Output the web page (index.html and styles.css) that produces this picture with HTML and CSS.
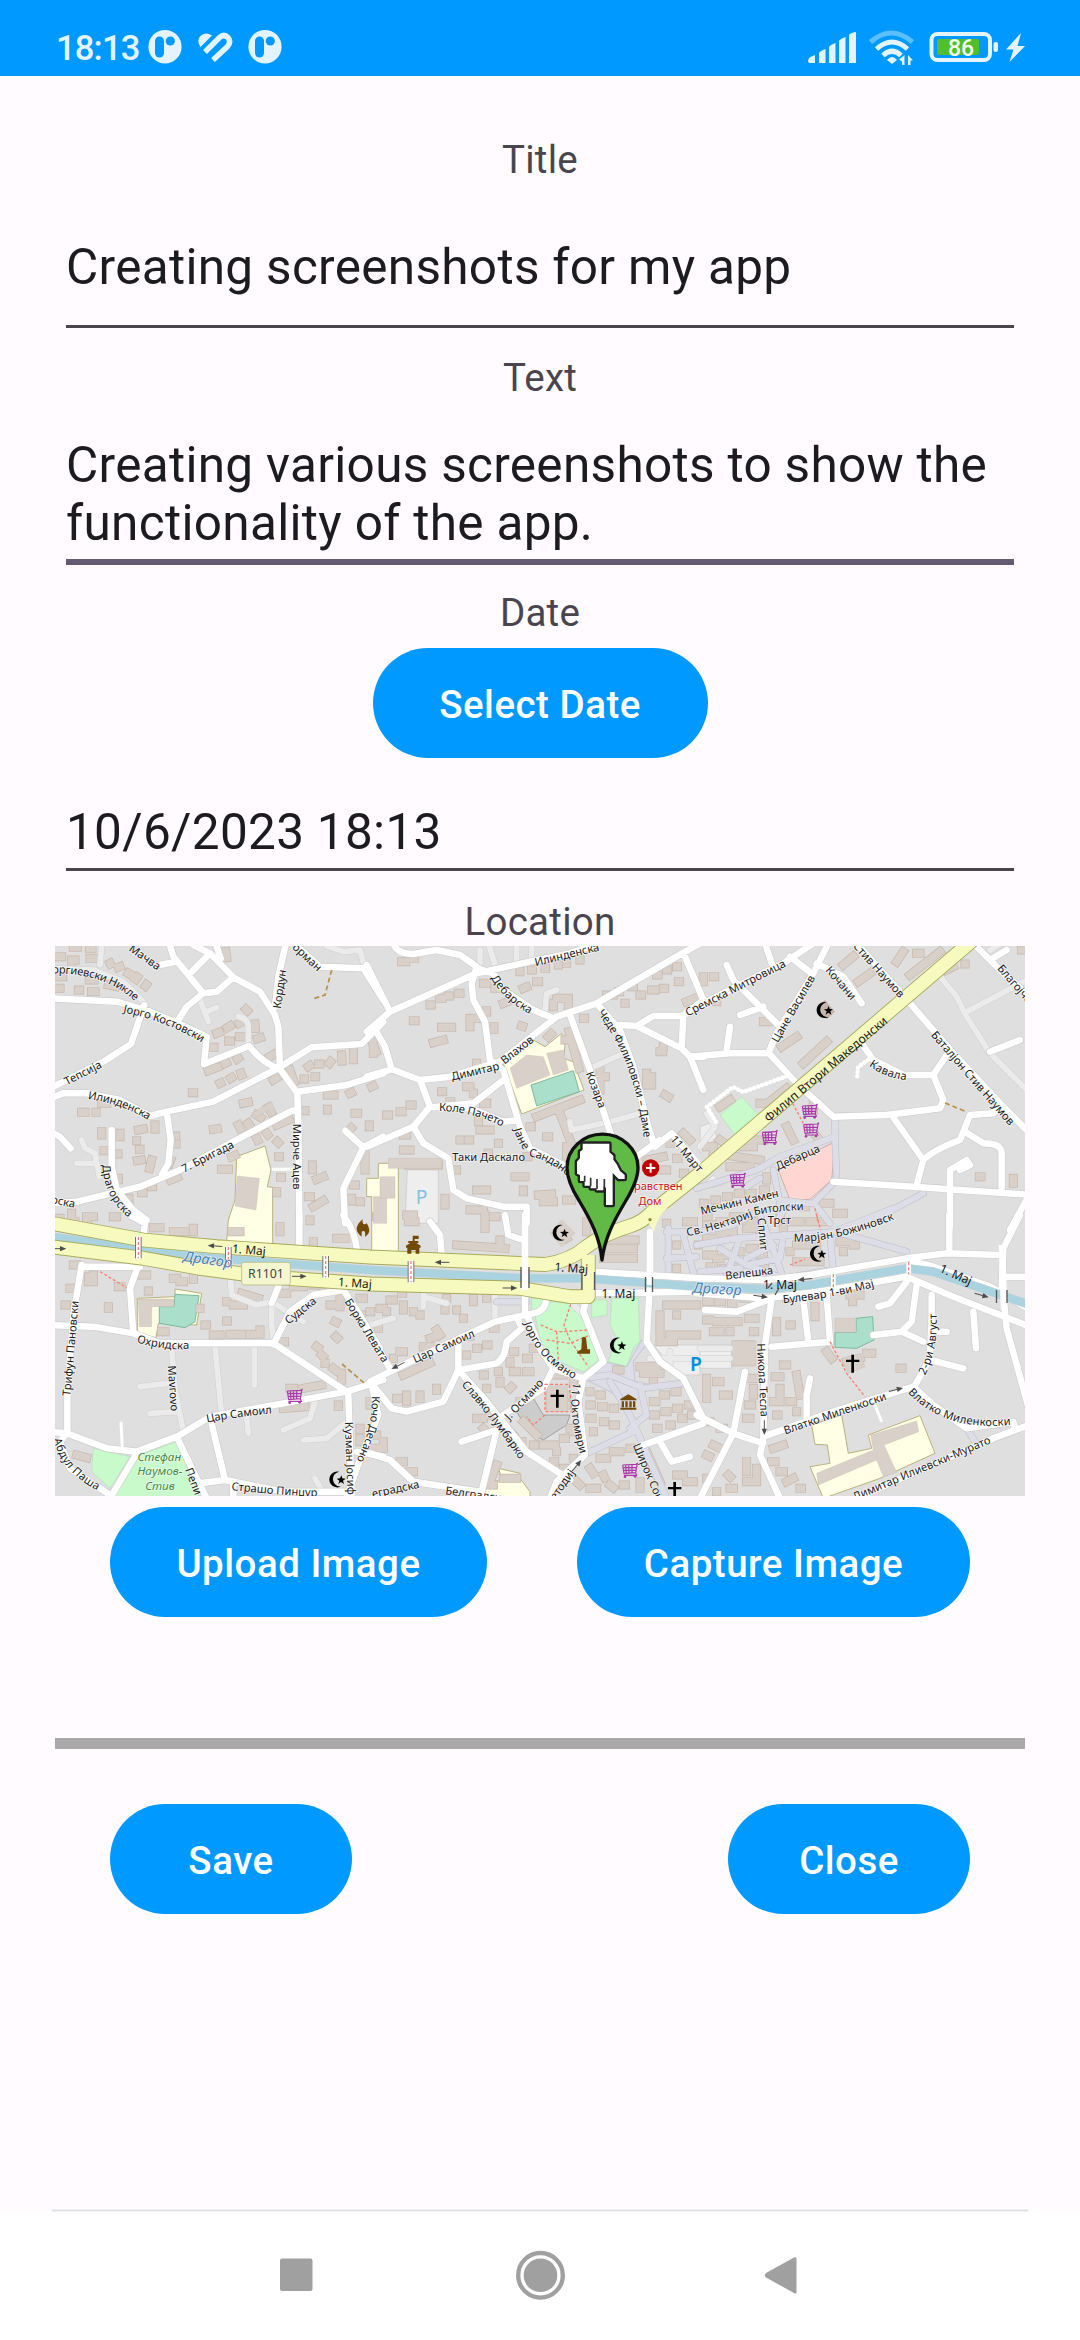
FILE: index.html
```html
<!DOCTYPE html>
<html lang="en">
<head>
<meta charset="utf-8">
<title>New note</title>
<link rel="stylesheet" href="styles.css">
</head>
<body>
<div class="screen">
<header class="status">
  <span class="clock">18:13</span>
  <svg class="notices" width="136" height="36" viewBox="147 29 136 36">
    <g id="badge"><ellipse cx="165" cy="46.7" rx="16.6" ry="16.8" fill="#e3f4ff"/><rect x="155" y="36.500" width="9" height="21" rx="4.500" fill="#0099ff"/><circle cx="170.300" cy="41" r="4.600" fill="#0099ff"/></g>
    <use href="#badge" x="100"/>
    <path d="M200.500 47Q196 40 201 35.500Q206 31.500 212 35.500Z" fill="#e3f4ff"/>
    <path d="M205 52L219.500 37.500Q224 33.500 228 37.500Q231.500 42 227.500 46.500L213 60" fill="none" stroke="#e3f4ff" stroke-width="5.500"/>
    <path d="M208 56.500L222 42.500" stroke="#e3f4ff" stroke-width="0"/>
  </svg>
  <svg class="signals" width="220" height="40" viewBox="806 27 220 40">
    <g fill="#e3f4ff"><path d="M808 61q0-4 7-6v8h-5q-2 0-2-2zM819 53q1-2 6.500-4v14h-6.500zM829 47q1-2 6.500-4v20h-6.500zM839 41q1-2 6.500-4v26h-6.500zM849 35q1-2 7-3v31h-7z"/></g>
    <g fill="none" stroke="#e3f4ff" stroke-width="5"><path d="M870.500 42Q891 24 912.500 42" opacity=".4"/><path d="M876.500 49Q892 35 907.500 49M883 55.500Q892 47 901 55.500"/></g>
    <path d="M887 60q5-6 10 0l-5 4z" fill="#e3f4ff"/>
    <path d="M904.500 55v10h-2.500v-3.500l-3-2zM908 65v-10l5 5.500h-2.500v4.500z" fill="#e3f4ff"/>
    <rect x="931.500" y="34" width="58.500" height="26" rx="6" fill="none" stroke="#e3f4ff" stroke-width="4"/>
    <rect x="937" y="39" width="42" height="16" rx="2" fill="#50be2d"/>
    <text x="961" y="56" class="charge">86</text>
    <rect x="993.500" y="42" width="4.500" height="10" rx="2" fill="#e3f4ff"/>
    <path d="M1021 33L1006 49.500H1013.500L1009.500 62L1025 46H1017.500Z" fill="#e3f4ff"/>
  </svg>
</header>
<main class="form">
  <div class="label title-label">Title</div>
  <div class="field title-field">Creating screenshots for my app</div>
  <div class="label text-label">Text</div>
  <div class="field text-field">Creating various screenshots to show the functionality of the app.</div>
  <div class="label date-label">Date</div>
  <button class="btn date-btn">Select Date</button>
  <div class="field date-field">10/6/2023 18:13</div>
  <div class="label place-label">Location</div>
  <svg class="map" width="970" height="550" viewBox="55 946 970 550">
  <defs>
    <g id="cart"><path d="M-22-16L18-18L24-22M-22-16L-18 10L17 7L22-22M17 7L20 15H-18M-20-8H18M-19 0H17M-13-16L-11 9M-4-16L-3 9M6-16L6 8" fill="none" stroke="#ac39ac" stroke-width="3.500"/><circle cx="-15" cy="19" r="4" fill="#ac39ac"/><circle cx="15" cy="18" r="4" fill="#ac39ac"/></g>
    <g id="crescent"><path d="M8-23A24 24 0 1 0 14 21A20 20 0 1 1 8-23Z"/><path d="M14-12L17-3L27-2L19 4L22 14L13 8L5 14L8 4L0-2L10-3Z"/></g>
    <path id="cross" d="M-4-26H4V-11H20V-4H4V28H-4V-4H-20V-11H-4Z"/>
    <g id="hall" fill="#734a08"><path d="M-24-10L0-24L24-10V-6H-24ZM-20-3h7v18h-7zM-9-3h7v18h-7zM3-3h7v18h-7zM14-3h7v18h-7zM-24 16h48v6h-48z"/></g>
    <g id="arrow"><path d="M-22 0H8" stroke="#4d4d4d" stroke-width="3"/><path d="M22 0L3-8V8Z" fill="#4d4d4d"/></g>
    <g id="bridge"><path d="M0-32V32" stroke="#777" stroke-width="20"/><path d="M0-34V34" stroke="#fff" stroke-width="14"/><path d="M0-32V32" stroke="#fa8072" stroke-width="4" stroke-dasharray="9 6"/></g>

    <g id="streets">
      <path transform="translate(50 940) scale(.33333)" d="M0 175L200 185L300 215L385 250L470 290L462 372L597 318Q640 372 690 387M0 445L160 365L243 312L283 195M0 475L40 460H110L210 480L300 528L350 515L490 485L680 387L785 322L935 312L1000 245M350 515L362 600L355 670L335 705M0 790L80 785L270 740L390 690L550 605L720 515L742 508M355 0L370 50L460 160L500 155L550 112L480 40L420 100M430 15L480 40M500 20L512 55M550 112L630 155L675 225L685 260L690 387L742 460L745 550L748 850M742 455L890 435L1000 400M460 160L410 200L385 240M710 0L685 110L675 200M330 75L380 65M185 570V680L200 750L250 810L290 840M0 575L30 590L62 625M740 18L810 80L940 85L1000 180M885 572L940 622L1000 590M940 622L880 745L885 850"/>
      <path transform="translate(370 940) scale(.33333)" d="M-10 275L60 215L320 100L480 65L600 40L720 0M-10 75L60 215M10 260L45 320L65 388L150 420L240 410L390 365L560 230L680 190L940 38L1000 5M-10 410L65 388M70 10Q80 42 130 42L200 30L270 45L320 80L305 130L310 180L345 245L360 360L400 390L450 560L480 625L590 680M320 85L370 100L400 150L490 210L550 235M600 225L660 390L725 590M680 190L750 270L790 380L835 560L855 620L905 580M750 255L800 258L850 228H940L1000 180M800 258L935 325L960 350H1000M940 225L935 325M960 350L1000 450M940 38L1000 180M400 420L310 490L200 500M150 420L180 500L130 560L-10 620M130 560L160 610L235 655L250 750L290 775L400 800H470V850M180 500L300 505L400 545L445 540M905 580L940 620L1000 690M870 600L800 650"/>
      <path transform="translate(700 940) scale(.33333)" d="M-40 215L120 135L250 70L340 10M80 75L100 120L240 260M120 225L190 200M90 260L80 330M-30 350L90 340H205L230 280L340 100L385 10M270 50L335 100M195 10L215 70M350 70L430 110L485 190M460 0L600 155L760 340L900 490L1000 590M205 338L290 430L400 530L560 525L720 505L730 480L700 405L740 345M700 405H610L520 360L485 310M575 525L670 660L650 735M670 660Q700 630 780 600L810 525L880 520L900 495M795 575L850 610Q905 610 905 640V745M400 725L640 740L1000 765M750 860V690L800 660L810 675L780 690M820 10L900 90L1000 180M870 335L960 300M990 760L930 870M870 60L920 30"/>
      <path transform="translate(50 1215) scale(.33333)" d="M0 330L130 335L250 355L330 385H670L890 530L1000 495M95 150L70 300L52 540V650M95 155H270M265 150L240 220L250 355M280 60L285 25L240 0M670 388L720 290L790 240L880 225L910 270L990 400M0 650L50 655L170 700L260 710L380 665L480 605L700 565L890 530M380 665L440 790L470 850M480 605L525 795L450 805M525 795L700 830H900M895 540L905 850M550 800V850M260 715L180 850M50 655L30 680L60 760L180 840M965 510L985 600L920 760L890 850M920 710L1000 725M748 0V90M880 0Q915 50 920 100M685 215L665 265"/>
      <path transform="translate(370 1215) scale(.33333)" d="M0 500L130 435L375 320L490 295Q525 290 530 250M440 305L455 340L410 380Q405 430 380 445L265 465L220 560L110 590L65 580L0 500M265 380V465L350 560L470 710L600 795M275 680L380 645L330 850M-10 340L60 460M475 310L510 400L550 460L640 490L700 440L640 290L650 240M550 460L520 520L400 600M640 490L625 560L645 720L560 800L540 850M0 715L60 735L130 800L330 830M180 20L210 60L215 120M465 0V300M405 0L415 60L460 75M840 50V200L830 380L870 440L940 490L1000 610M820 690L1000 625M870 680L905 740L960 725M670 170L990 190M670 235L990 230"/>
      <path transform="translate(700 1215) scale(.33333)" d="M0 190L200 195L330 180L620 130L740 115L900 120M-10 235L200 250L390 225L620 185L760 245L990 335M640 140L700 155L870 215L1000 290M15 285L110 290L215 250L195 390L190 670M215 395L390 380L380 240M310 255L325 380M620 200L570 265L535 275M650 210L635 320L605 350L670 380M520 360L605 350M695 240V350H740M695 300L690 430L640 520M690 435L790 460M820 290L828 400M910 240L920 340L1000 630M905 230L910 100L960 0M748 0V110M920 185H1000M190 665L400 590L640 515L700 570L800 640L940 620L945 640M-10 600L100 655L190 685M135 470L100 655L0 850M190 670L180 720L240 850M330 490L320 540V620M420 870L880 670L1000 625"/>
    </g>
    <g id="lanes">
      <path transform="translate(50 940) scale(.33333)" d="M0 85L130 90L220 125L285 190M155 18L150 75M95 600L105 625L135 640L148 710M80 670H140M450 180L475 245M470 215L500 203M565 230Q595 235 595 260V310M830 18L880 35L930 30L945 85"/>
      <path transform="translate(370 940) scale(.33333)" d="M355 10L380 90M440 10V60M485 10V60M525 210L530 160L560 150M660 385L750 345M600 545L605 570L720 545L830 515M330 30V70"/>
      <path transform="translate(700 940) scale(.33333)" d="M720 110L770 170L800 230L870 340L1000 470M800 215L1000 110M20 520L45 560L0 620M870 30L920 0"/>
      <path transform="translate(50 1215) scale(.33333)" d="M365 400L375 520L400 650M270 515L355 505M300 595L380 590M495 395L515 600M613 395V510M590 605L595 655M700 645L780 610L795 560M760 675L830 670L890 620M540 170L545 240L620 270L665 260V330L672 385M665 260L760 320M795 790L815 825"/>
      <path transform="translate(370 1215) scale(.33333)" d="M160 230V275M160 245L230 265M0 330L70 310M375 235V320M610 270Q660 310 680 380M840 430H990M900 410V460"/>
      <path transform="translate(700 1215) scale(.33333)" d="M0 400H90M0 430H90"/>
    </g>
    <g id="walks">
      <path transform="translate(700 940) scale(.33333)" d="M405 540V590L240 650L170 690L-10 745M405 590L410 720L340 790H240L220 690M140 740L180 715M240 780L320 790M500 850L670 760M260 790L230 850M350 800L390 850"/>
      <path transform="translate(370 1215) scale(.33333)" d="M463 220V300M380 260H470M640 490L720 480L820 520L940 505M720 500L780 600L890 850M780 640L830 600L810 510M640 720L790 650M890 50H1000M895 40V190M890 130L980 125M940 60L975 190"/>
      <path transform="translate(700 1215) scale(.33333)" d="M-10 90L110 70L270 60L400 50L480 70L620 110M60 100L140 150L250 190L395 165M120 70L80 180M180 0L215 90L250 190M390 50L400 180M0 50L100 30L170-10M250 60L240 130L140 150M140 130L220 90M400 50L480 20L580-20M800 640L825 680M0 170L120 160"/>
    </g>
    <g id="houses">
      <path transform="translate(50 940) scale(.33333)" d="M25 50h10M70 22h12M118 25h8M65 60h10M120 55h14M22 110h16M65 80h0M118 120h14M22 145h8M85 150h4M125 155h10M180 70l1 2M205 82l5-2M235 100l10 6M258 118l4-6M286 138l3-4M175 135l20 4M528 35l2 18M588 208l4 4M500 280l8-3M532 263l8-5M568 250l6-3M536 303h5M568 290h8M615 252l1 13M622 296l9-3M490 322h2M475 392l28-10M525 370l4-2M562 357l3-2M510 430l2-1M542 415l3-2M573 400l2 5M427 458h4M660 350l14-8M670 420l10-6M720 390l12 35M762 417h2M795 410h2M775 380l4-3M806 372h4M838 370l4-5M875 345l1 18M910 335v24M970 315l8 20M95 517h10M138 517h0M155 490h15M155 575v10M210 580v10M265 570l15-3M315 555v12M260 602h0M268 628h2M262 662l12-2M305 660l-6 25M375 588h2M378 612h0M204 642h0M205 715v4M162 632h0M490 568l12-2M580 490l15-3M565 555l6 12M595 550l8 12M620 525l12 8M655 502l8 14M620 595l3 6M650 580l3 4M682 605l3 3M680 555l38-16M763 512h2M832 508v2M832 465h20M900 460l4-2M965 440l4-2M915 520h8M958 555v5M900 568l4-4M515 688h20M545 650l10-4M686 650h2M692 712h2M680 755v3M787 675v14M800 718l20-8M775 770h6M790 800l30-18M910 735h6M905 775v8M945 640v50M930 785h2M362 720l20-8M305 740h3M275 758h4M237 775v5M65 820v8M110 830h20M190 830h10M358 670l4-10"/>
      <path transform="translate(370 940) scale(.33333)" d="M95 65h12M130 55h4M130 242h5M215 262h30M300 235v25M315 235h20M350 212v4M372 260v8M190 308l30-8M180 195h4M208 175h8M235 168h4M265 160h5M340 130h10M375 145h3M400 190l10-4M460 145l10-4M500 125h6M450 95h0M485 90h2M525 85h2M565 75h0M590 70h0M630 60h0M560 175h35M595 180v20M550 190v10M455 258l3 1M535 290l8-8M640 235h4M597 275l30 110M585 300h4M710 165h20M745 155h4M785 140h5M765 190h0M810 165h5M845 150h10M880 145h4M925 125h4M860 105h4M890 90h3M920 80h2M950 185l25-10M870 335h8M690 390v40M700 410h6M830 400v35M845 410v25M885 465l10 6M690 450h0M10 300v40M100 585h10M100 630h20M50 525h6M90 515h6M120 495h6M215 455h3M240 485h2M290 440h10M310 460h0M340 490h10M325 540v5M330 570h30M270 600h0M295 600h4M385 610h0M355 640h0M320 370v5M260 690h0M320 750h30M225 775v20M300 810h40M370 830h8M435 710h30M460 750v5M505 765l40-3M520 785h30M590 780h15M530 590h6M480 560h4M500 530L630 480M570 520L600 600M590 620v40M940 580l20 20M900 600v10M920 655h4M940 700h4M830 660l50-10M840 690h50M115 675h90M470 650h4M610 620v30M880 320h0"/>
      <path transform="translate(700 940) scale(.33333)" d="M10 110v15M40 110h4M50 185h0M190 245h15M430 75l30-26M475 125l35-25M630 105l90-70M590 65l20-30M650 40h10M740 90l20-10M795 72h0M965 30h0M245 320L290 290M310 370L380 305M60 500l30-20M180 490h20M215 480L260 445M20 620h20M60 600L90 620M40 640L180 660M90 680h60M100 620h60M150 600h40M260 560l20 40M350 590l5 6M838 710h5M940 715v15M340 490v20M10 790h4M45 780h4M80 770h6M115 760h6M150 760h6M190 750h6M200 710v10M20 830h4M370 790h20M410 820h20M310 800h6"/>
      <path transform="translate(50 1215) scale(.33333)" d="M20 10h10M75 20h0M110 25h2M310 38h20M370 50h35M430 40v10M545 50h25M690 35v15M780 15v2M860 70h25M790 80v8M70 150h10M115 185v15M130 180v20M60 220h2M45 270h4M175 275v5M205 215h8M260 180h30M295 228h0M370 190h10M430 185v8M390 200h10M530 260h0M530 318h2M575 235l50 15M550 270h30M450 280h0M465 330h4M335 350h10M490 360h20M540 358h35M600 358h8M630 345v12M700 380h4M730 215h30M790 210h25M840 270h10M870 250v25M855 320l4 2M858 365l4 4M800 395l4 3M815 420l4 4M825 445h0M850 460l8 6M875 475v20M720 520h10M760 520L815 510M700 580L765 575M865 570v4M960 560v10M930 640v4M930 670v10M80 720l30 8M240 70h20M690 235h20M930 250h10M960 290h2M985 330v10M930 300h4M960 700h20"/>
      <path transform="translate(370 1215) scale(.33333)" d="M115 20h20M345 0v40M260 90L405 100M390 75v20M575 45l15 25M650 20v30M700 100h90M720 75h75M700 130h90M20 5v0M110 0h20M30 280h10M60 255h10M50 290h0M95 235h3M100 270v15M130 290h0M150 300h0M225 285h0M230 250h0M260 285h0M310 250v10M350 250h0M200 345l10 15M180 370l15-5M160 395h20M280 310v0M90 410h10M70 430h0M100 480l80-36M300 360v4M320 400h3M350 390h4M370 340h5M290 420h0M200 520v6M110 540v20M80 550h4M150 540v10M340 480h3M385 470h0M420 440v4M430 410h4M470 430h5M490 400h0M430 470h10M470 470h10M390 500v4M350 520h0M420 520l4-4M450 560h4M320 610h20M360 600h0M340 640l10 10M420 650l10 10M460 620l40 40M450 680h6M490 690h4M520 690h10M550 690h6M580 670h6M610 650h0M550 740h4M580 760h4M610 730h0M540 540H590M540 570H590M550 480h30M610 500h0M870 300v80M890 270h90M920 300v0M900 360h80M880 380h30M740 465h10M810 455h50M820 475h50M850 500h0M660 530h0M690 540h4M660 570h4M695 575h6M730 580h4M660 610h6M700 620h4M670 650h0M730 630h6M850 560h8M880 540h6M915 530h6M850 600h6M885 590h6M920 580h6M955 570h6M860 640h4M900 630h4M935 610h4M965 600h0M660 760l10 15M690 730h20M730 710h20M700 780l4 8M720 810l10 8M660 820h20M780 700h4M620 800l10 10M760 810h6M810 800v20M830 710l40 90M920 780h20M950 800h20M380 750l-20 50M400 790h40M90 740h10M120 770h10M40 680v20M20 660v0M350 810h20M890 25h0M920 90h0M950 20h20M920 160h0M985 90h0M600 640h0M560 710h0"/>
      <path transform="translate(700 1215) scale(.33333)" d="M20 30h20M60 20h10M100 5h20M20 70h20M60 55h10M90 50h10M140 40h20M150 20h10M20 120h20M50 130h10M80 120h0M30 155h10M70 160h4M110 110h10M150 100h14M110 140h0M180 60h0M180 120h10M190 160h4M270 20h30M330 20h20M370 20h4M290 90h60M270 110h0M290 140h70M350 90v50M330 70h0M420 80h30M430 110h0M460 90h6M250 40h0M240 10h0M20 260h10M55 260h10M95 265h4M130 250h10M20 315h10M50 320h10M80 320h10M110 320h4M145 310h20M160 350h4M40 350h20M90 350h0M345 275v30M450 240h30M458 260v0M230 320v30M270 330h4M260 250h0M110 390H150V440H110ZM120 410h20M380 410l15 20M440 440L480 430M500 415h15M600 460h6M20 490v60M50 500h10M70 540h15M150 490h30M160 520v20M145 570h10M225 485h15M250 450h10M240 520v40M220 560h20M290 480l10 60M270 560h8M230 600h4M290 590h0M30 620h0M60 640h10M140 610h10M40 690l20 10M20 720l8 4M85 780l6 6M140 740v30M170 760v20M140 800h30M90 820h10M50 830h0M220 700l30-10M215 740h10M240 770h10M260 800l20-10M300 820h4M20 790h0"/>
    </g>
    <path id="p1" d="M10 85Q170 85 262 170"/><path id="p2" d="M216 201Q360 230 468 298"/><path id="p3" d="M110 462Q220 475 306 530"/><path id="p4" d="M172 668Q175 770 250 824"/><path id="p5" d="M372 100Q410 170 492 212"/><path id="p6" d="M205 498Q310 498 405 548"/><path id="p7" d="M688 203Q810 350 837 600"/><path id="p8" d="M482 634Q560 650 625 720"/><path id="p9" d="M444 557Q455 600 478 628"/><path id="p10" d="M512 363Q560 400 624 406"/><path id="p11" d="M260 366Q330 390 422 388"/><path id="p12" d="M368 446L378 594"/><path id="p13" d="M466 608Q560 590 667 580"/><path id="p14" d="M24 664Q45 760 153 815"/><path id="p15" d="M474 314Q505 420 625 482"/><path id="p16" d="M626 500Q605 580 646 718"/><path id="p17" d="M628 516Q740 640 940 613"/><path id="p18" d="M280 495Q370 590 465 732"/><path id="p19" d="M980 535Q985 650 928 750"/><path id="p20" d="M658 480Q700 410 695 290"/><path id="p21" d="M295 65Q410 65 585-4"/><path id="p22" d="M240 251Q400 235 527 199"/><path id="p23" d="M240 647H472"/><path id="p24" d="M-65 54Q70 28 165-15Q230-29 335-31"/><path id="p25" d="M537 809Q670 825 811 830"/>
  </defs>

  <rect x="55" y="946" width="970" height="550" fill="#dfdfdf"/>
  <g class="grounds">
    <g transform="translate(50 940) scale(.33333)"><path class="school" d="M560 650L645 618L663 690L652 740L668 742V915L530 905L535 840L555 780ZM950 715H985V670H1045V945H965V770H950Z"/></g>
    <g transform="translate(370 940) scale(.33333)"><path class="school" d="M400 370L490 300L525 320L575 280L585 318L580 355L610 365L642 450L455 522Z"/><path class="pitch" d="M483 435L610 392L628 455L500 498Z"/><path class="lot" d="M112 690H205V850H105Z"/></g>
    <g transform="translate(700 940) scale(.33333)"><path class="plaza" d="M235 690L405 605L395 720L330 778L270 780Z"/><path class="park" d="M60 525L125 470L175 525L105 585Z"/><path class="lot" d="M0 560L40 545L50 590L0 640ZM0 740L40 705L70 735L0 750Z"/></g>
    <g transform="translate(50 1215) scale(.33333)"><path class="school" d="M262 250L375 245V222L455 235L440 330L325 325L318 368L262 355Z"/><path class="pitch" d="M375 238L447 242L435 320L405 338L328 325V275H372Z"/><path class="park" d="M255 725L380 680L450 850H190ZM130 700L240 725L180 820L125 770Z"/><path class="school" d="M810 200H825V230H810Z"/></g>
    <g transform="translate(370 1215) scale(.33333)"><path class="park" d="M495 300L540 260L610 265L660 350L695 430L640 470L520 420ZM725 250H805L810 380L790 400L770 455L715 440L740 370L720 330ZM485 250H530L505 290H485ZM665 255H712V300L665 308Z"/><path class="walkarea" d="M640 490L700 440L770 455L815 375L832 385L790 440L795 500L850 510L780 570L720 530Z"/><path class="lot" d="M850 390H990V480H930Z"/><path d="M440 590L490 550L520 600L600 600L590 630L520 675L480 655Z" fill="#ccc" stroke="#888" stroke-width="2"/><path class="school" d="M385 760L450 775V790L480 830V850H340L350 795L400 800Z"/></g>
    <g transform="translate(700 1215) scale(.33333)"><path class="lot" d="M0 390H95V460H0Z"/><path class="school" d="M335 630L425 600L445 715L515 700L505 660L660 602L705 715L540 790L370 850L330 755L390 745L382 690L345 688Z"/><path class="pitch" d="M405 352H468V310L518 305L522 375L470 400L405 397Z"/></g>
  </g>
  <use href="#houses" class="house-edge"/><use href="#houses" class="house"/>
  <g class="block">
    <path transform="translate(50 940) scale(.33333)" d="M562 708L628 715L618 810L555 798ZM970 770H1010V850H970ZM605 520L665 485L678 520L665 530L655 510L620 532Z"/>
    <path transform="translate(370 940) scale(.33333)" d="M420 385L470 345L520 350L540 405L440 445ZM530 340L580 330L595 390L550 405ZM30 710H75V775H30ZM55 655H215V685H55Z"/>
    <path transform="translate(50 1215) scale(.33333)" d="M265 252H372V275H305V335H268Z"/>
    <path transform="translate(370 1215) scale(.33333)" d="M530 512H592V590H530ZM540 55L575 15L615 55L575 95Z"/>
    <path transform="translate(700 1215) scale(.33333)" d="M350 775L520 705L512 660L650 618L656 650L552 690L590 772L550 785L530 735L355 810ZM405 310H468V352H405ZM95 378H168V452H95ZM425 430L480 415L495 455L445 475Z"/>
  </g>
  <use href="#lanes" class="lane-edge"/><use href="#lanes" class="lane"/>
  <use href="#walks" class="walk-edge"/><use href="#walks" class="walk"/>
  <use href="#streets" class="street-edge"/>
  <g class="thin"><path d="M271.700 1169.300H297M121 1421.700L122.300 1448M875 1405L881.700 1422"/></g>
  <use href="#streets" class="street"/>
  <path class="dotted" d="M707 1107L733 1087L743 1092L790 1075M707 1107L716 1122M868 1060L858 1067L857 1080"/>
  <path d="M50 1236.700L136.700 1248.300L216.700 1258.300L326.700 1266.700L370 1270L523.300 1278.300H583.300L700 1286.700L766.700 1289L810 1285L906.700 1268.300L933.300 1271.700L1030 1305" fill="none" stroke="#c9d6da" stroke-width="9"/>
  <path d="M50 1236.700L136.700 1248.300L216.700 1258.300L326.700 1266.700L370 1270L523.300 1278.300H583.300L700 1286.700L766.700 1289L810 1285L906.700 1268.300L933.300 1271.700L1030 1305" fill="none" stroke="#aad3df" stroke-width="8"/>
  <g class="major-edge"><path id="major" d="M980 934L700 1173.300L653 1211Q643 1222 630 1226Q603 1234 586 1247Q570 1261 545 1264.500L370 1257L216.700 1246.700L143.300 1240L50 1223M50 1246.700L143.300 1258.300L200 1268.300L263.300 1276.700L370 1284L520 1288.300L570 1296.700H588.300V1255"/></g>
  <use href="#major" class="major"/>
  <path d="M650 1225L643 1212L668 1208Q657 1216 654 1232Z" fill="#f7fabf"/>
  <path class="street" d="M525 1225V1290M650 1233V1285M1002 1245L1004 1310"/>
  <g stroke="#555" stroke-width="1.300"><path d="M521 1267V1288M529 1267V1288M582 1272V1290M594.500 1272V1290M645.500 1277V1292M652.500 1277V1292M996.500 1290V1303M1007 1290V1303M768 1288L772 1283M775 1295L779 1288"/></g>
  <g transform="translate(50 1215) scale(.33333)"><use href="#bridge" x="265" y="98"/><use href="#bridge" x="535" y="128"/><use href="#bridge" x="827" y="155"/><use href="#bridge" x="1083" y="170"/></g>
  <g transform="translate(700 1215) scale(.33333)"><path d="M400 178V225M626 142V178" stroke="#fff" stroke-width="14"/><path class="foot" d="M400 178V225M626 142V178"/></g>
  <g class="foot">
    <path transform="translate(50 1215) scale(.33333)" d="M150 170L230 218"/>
    <path transform="translate(370 1215) scale(.33333)" d="M602 268L582 330L600 375L655 455M512 330L560 350L580 350L655 345M530 375L600 385L660 360M560 350L565 440M525 508H598L605 590H525ZM525 600L490 630L470 605"/>
    <path transform="translate(700 1215) scale(.33333)" d="M390 380L440 475L495 545M350 0L362 45M270 150L315 132"/>
    <path transform="translate(700 940) scale(.33333)" d="M278 490L310 550M345 805L355 850"/>
  </g>
  <g fill="none" stroke="#ba9147" stroke-width="1.700" stroke-dasharray="5 3"><path d="M331.700 970L325 995L311.700 999.300M342 1364L364 1383M945 1103L967 1112"/></g>

  <g class="names">
    <g transform="translate(50 940) scale(.33333)">
      <text><textPath href="#p1" startOffset="50%">оргиевски Никле</textPath></text><text><textPath href="#p2" startOffset="50%">Јорго Костовски</textPath></text><text><textPath href="#p3" startOffset="50%">Илинденска</textPath></text><text><textPath href="#p4" startOffset="50%">Драгорска</textPath></text>
      <text transform="translate(286 50) rotate(35)">Мачва</text><text transform="translate(687 147) rotate(-82)">Кордун</text><text transform="translate(773 50) rotate(43)">орман</text><text transform="translate(98 397) rotate(-27)">Тепсија</text><text transform="translate(472 648) rotate(-27)">7. Бригада</text><text transform="translate(743 650) rotate(90)">Мирче Ацев</text><text transform="translate(40 783) rotate(12)">рска</text>
    </g>
    <g transform="translate(370 940) scale(.33333)">
      <text><textPath href="#p5" startOffset="50%">Дебарска</textPath></text><text><textPath href="#p6" startOffset="50%">Коле Пачето</textPath></text><text><textPath href="#p7" startOffset="50%">Чеде Филиповски – Даме</textPath></text><text><textPath href="#p9" startOffset="50%">Јане</textPath></text><text><textPath href="#p8" startOffset="50%">Сандански</textPath></text><text><textPath href="#p23" startOffset="50%">Таки Даскало</textPath></text>
      <text transform="translate(315 392) rotate(-13)">Димитар</text><text transform="translate(440 328) rotate(-38)">Влахов</text><text transform="translate(590 42) rotate(-14)">Илинденска</text><text transform="translate(680 448) rotate(69)">Козара</text><text transform="translate(952 640) rotate(50)">11 Март</text><text class="health" x="865" y="738">равствен</text><text class="health" x="840" y="783">Дом</text><text class="parking" x="155" y="770">P</text>
    </g>
    <g transform="translate(700 940) scale(.33333)">
      <text transform="translate(105 142) rotate(-27)">Сремска Митровица</text><text transform="translate(278 205) rotate(-60)">Цане Василев</text><text transform="translate(424 128) rotate(49)">Кочани</text><text transform="translate(538 88) rotate(48)">Стив Наумов</text><text class="big" transform="translate(377 387) rotate(-40)">Филип Втори Македонски</text><text transform="translate(820 413) rotate(49)">Баталјон Стив Наумов</text><text transform="translate(946 130) rotate(49)">Благојче</text><text><textPath href="#p10" startOffset="50%">Кавала</textPath></text><text transform="translate(292 650) rotate(-24)">Дебарца</text><text transform="translate(118 784) rotate(-13)">Мечкин Камен</text>
    </g>
    <g transform="translate(50 1215) scale(.33333)">
      <text class="water" transform="translate(474 132) rotate(8)">Драгор</text>
      <text class="quay" transform="translate(597 104) rotate(5)">1. Мај</text><text class="quay" transform="translate(915 203) rotate(4)">1. Мај</text><rect x="575" y="142" width="146" height="68" rx="7" fill="#f5f6cf" stroke="#c0c593" stroke-width="3"/><text class="ref" x="648" y="177">R1101</text>
      <text transform="translate(60 400) rotate(-85)">Трифун Пановски</text><text><textPath href="#p11" startOffset="50%">Охридска</textPath></text><text><textPath href="#p12" startOffset="50%">Маvгоvо</textPath></text><text><textPath href="#p13" startOffset="50%">Цар Самоил</textPath></text><text><textPath href="#p14" startOffset="50%">Абдул Паша</textPath></text><text transform="translate(750 285) rotate(-38)">Судска</text><text transform="translate(952 345) rotate(58)">Борка Левата</text><text transform="translate(902 730) rotate(88)">Кузман Јосиф</text><text><textPath href="#p19" startOffset="50%">Кочо Десано</textPath></text><text><textPath href="#p25" startOffset="50%">Страшо Пинџур</textPath></text><text transform="translate(437 810) rotate(69)">Пепи Г</text>
      <g class="green"><text x="328" y="724">Стефан</text><text x="330" y="768">Наумов-</text><text x="330" y="812">Стив</text></g>
    </g>
    <g transform="translate(370 1215) scale(.33333)">
      <text class="quay" transform="translate(604 158) rotate(4)">1. Мај</text><text class="quay" x="745" y="237">1. Мај</text><text transform="translate(220 392) rotate(-24)">Цар Самоил</text><text><textPath href="#p15" startOffset="50%">Јорго Османо</textPath></text><text transform="translate(460 552) rotate(-47)">Ј. Османо</text><text><textPath href="#p18" startOffset="50%">Славко Лумбарко</textPath></text><text><textPath href="#p16" startOffset="50%">11 Октомври</textPath></text>
      <text transform="translate(843 785) rotate(67)">Широк Сокак</text><text transform="translate(76 820) rotate(-12)">еградска</text><text transform="translate(318 837) rotate(8)">Белградска</text><text transform="translate(566 820) rotate(-55)">Методиј</text><text class="parking strong" x="978" y="445">P</text>
    </g>
    <g transform="translate(700 1215) scale(.33333)">
      <text><textPath href="#p24" startOffset="50%">Св. Нектариј Битолски</textPath></text><text x="238" y="14">Трст</text><text transform="translate(190 57) rotate(85)">Сплит</text><text><textPath href="#p21" startOffset="50%">Марјан Божиновски</textPath></text><text transform="translate(147 172) rotate(-7)">Велешка</text><text class="water" transform="translate(52 220) rotate(3)">Драгор</text><text class="quay" x="240" y="208">1. Мај</text><text><textPath href="#p22" startOffset="50%">Булевар 1-ви Мај</textPath></text><text class="quay" transform="translate(768 178) rotate(24)">1. Мај</text><text transform="translate(190 495) rotate(87)">Никола Тесла</text><text><textPath href="#p20" startOffset="50%">2-ри Август</textPath></text><text transform="translate(404 593) rotate(-19)">Влатко Миленкоски</text><text><textPath href="#p17" startOffset="50%">Влатко Миленкоски</textPath></text><text transform="translate(664 758) rotate(-23)">Димитар Илиевски-Мурато</text>
    </g>
  </g>
  <g class="symbols">
    <g transform="translate(700 940) scale(.33333)"><path d="M350 200L375 180L405 215L380 238Z" fill="#c5b5aa"/><use href="#crescent" x="372" y="210"/><use href="#cart" x="329" y="514"/><use href="#cart" x="333" y="570"/><use href="#cart" x="209" y="593"/><use href="#cart" x="113" y="721"/></g>
    <g transform="translate(370 940) scale(.33333)"><circle cx="842" cy="684" r="26" fill="#bf0000"/><path d="M842 670V698M828 684H856" stroke="#fff" stroke-width="6"/></g>
    <g transform="translate(50 1215) scale(.33333)"><use href="#crescent" x="860" y="793"/><use href="#cart" x="734" y="544"/><path d="M935 65C910 45 920 30 938 12C935 30 945 30 950 25C962 45 960 55 945 66C948 50 942 45 935 50Z" fill="#734a08"/><g><use href="#arrow" x="27" y="101"/><use href="#arrow" transform="translate(495 93) rotate(184)"/><use href="#arrow" x="748" y="184"/></g></g>
    <g transform="translate(370 1215) scale(.33333)"><use href="#crescent" x="570" y="53"/><use href="#crescent" x="742" y="391"/><use href="#cross" x="562" y="550"/><use href="#cross" x="914" y="827"/><use href="#hall" x="775" y="562"/><use href="#cart" x="780" y="766"/><path d="M108 92L130 78L152 92V98H148V116H137V105H124V116H112V98H108ZM115 78H145V84H115ZM128 62H146V72H134V80H128ZM636 368L642 365L648 368L652 403H660V416H622V410L634 403Z" fill="#734a08"/><use href="#arrow" transform="translate(216 142) rotate(180)"/><use href="#arrow" x="420" y="219"/><use href="#arrow" transform="translate(84 452) rotate(153)"/><use href="#arrow" transform="translate(620 752) rotate(-50)"/><circle cx="840" cy="14" r="5" fill="#888b35"/></g>
    <g transform="translate(700 1215) scale(.33333)"><use href="#crescent" x="352" y="116"/><use href="#cross" x="458" y="445"/><use href="#arrow" transform="translate(315 193) rotate(174)"/><use href="#arrow" transform="translate(182 244) rotate(8)"/><use href="#arrow" transform="translate(845 241) rotate(16)"/><use href="#arrow" transform="translate(588 524) rotate(-14)"/><use href="#arrow" transform="translate(193 638) rotate(90)"/></g>
  </g>
  <g transform="translate(560 1125) scale(.33333)">
    <path d="M126 405C120 340 95 290 58 228C34 190 21 160 21 128A106 100 0 0 1 234 128C234 160 220 190 197 228C160 290 134 340 126 405Z" fill="#61b946" stroke="#111" stroke-width="10" stroke-linejoin="round"/>
    <path d="M68 56H148V82L160 92V104L170 118L180 138L194 150V162H176L158 144V240H138V188L130 184V196H110V190H92V182H74V168H60V150L51 146V110L60 100V80L68 74Z" fill="#fff" stroke="#222" stroke-width="14" stroke-linejoin="round" paint-order="stroke"/>
    <path d="M74 152V170M92 158V184M111 162V192M133 162V186" stroke="#333" stroke-width="5"/>
  </g>
  </svg>
  <div class="actions media"><button class="btn">Upload Image</button><button class="btn">Capture Image</button></div>
  <hr class="divider">
  <div class="actions"><button class="btn small">Save</button><button class="btn small">Close</button></div>
</main>
<nav class="navbar">
  <svg width="1080" height="129" viewBox="0 2211 1080 129" fill="#a0a0a0"><path d="M52 2210.500H1028" stroke="#dfe2e5" stroke-width="2"/><rect x="280" y="2258.500" width="32.500" height="32.500" rx="2"/><circle cx="540.500" cy="2275.300" r="16.800"/><circle cx="540.500" cy="2275.300" r="22.300" fill="none" stroke="#a0a0a0" stroke-width="4.300"/><path d="M766 2273L794 2257.500Q796.500 2256.500 796.500 2259V2292Q796.500 2294.500 794 2293L766 2277.500Q763.500 2275.300 766 2273Z"/></svg>
</nav>
</div>
</body>
</html>
```
FILE: styles.css
```css
* { box-sizing: border-box; }
body { margin: 0; background: #fffbff; font-family: Roboto, "Noto Sans", sans-serif; }
.screen { width: 1080px; height: 2340px; display: flex; flex-direction: column; overflow: hidden; }
.status { height: 76px; flex: none; background: #0099ff; color: #e3f4ff; display: flex; align-items: flex-start; padding: 27px 54px 0 56px; }
.clock { width: 91px; font-size: 34.5px; line-height: 42px; font-weight: 500; letter-spacing: -.8px; white-space: nowrap; }
.notices { margin-top: 2px; }
.signals { margin-left: auto; }
.charge { font: 500 23px Roboto, sans-serif; fill: #f1fff0; text-anchor: middle; }
.form { flex: 1; display: flex; flex-direction: column; align-items: center; padding: 61px 55px 0; }
.label { font-size: 38.5px; line-height: 46px; height: 46px; color: #49454f; flex: none; letter-spacing: .25px; }
.field { width: 948px; flex: none; font-size: 49.5px; line-height: 58px; color: #1c1b1f; border-bottom: 3px solid #49454f; letter-spacing: .3px; }
.title-field { margin-top: 55px; height: 90px; }
.text-label { margin-top: 27px; }
.text-field { margin-top: 35px; height: 129px; border-bottom: 6px solid #655b71; }
.date-label { margin-top: 25px; }
.date-btn { margin-top: 12px; width: 335px; }
.date-field { margin-top: 45px; height: 68px; }
.place-label { margin-top: 28px; }
.btn { border: 0; height: 110px; border-radius: 55px; background: #0099ff; color: #fff; font: 500 38.5px/46px Roboto, sans-serif; letter-spacing: .5px; padding: 4px 0 0; flex: none; }
.btn.small { width: 242px; }
.map { margin-top: 1px; flex: none; display: block; }
.actions { width: 100%; padding: 0 55px; display: flex; justify-content: space-between; }
.media { margin-top: 11px; }
.media .btn:first-child { width: 377px; }
.media .btn:last-child { width: 393px; }
.divider { width: 100%; height: 11px; margin: 121px 0 55px; border: 0; background: #a9a9a9; flex: none; }
.navbar { height: 129px; flex: none; background: #fff; }
.navbar svg { display: block; overflow: visible; }

.school { fill: #ffffe5; stroke: #b9b27d; stroke-width: 3; }
.pitch { fill: #aae0cb; stroke: #7cb89f; stroke-width: 3; }
.park { fill: #c8facc; stroke: #b3dfb7; stroke-width: 2; }
.plaza { fill: #ffd6d1; stroke: #d3aea9; stroke-width: 3; }
.lot { fill: #eee; stroke: #cdc6c6; stroke-width: 2; }
.walkarea { fill: #dddde8; stroke: #b9b9c8; stroke-width: 2; }
.block { fill: #d9d0c9; stroke: #c5b5aa; stroke-width: 1; }
.house-edge, .house { fill: none; stroke-linecap: square; }
.house-edge { stroke: #c6b6aa; stroke-width: 27; }
.house { stroke: #d9d0c9; stroke-width: 23; }
.street-edge, .street, .lane-edge, .lane, .walk-edge, .walk { fill: none; stroke-linecap: round; stroke-linejoin: round; }
.street-edge { stroke: #cdcdcd; stroke-width: 23; }
.street { stroke: #fff; stroke-width: 19.5; }
path.street { stroke-width: 6.5; stroke-linecap: butt; }
.lane-edge { stroke: #cfcfcf; stroke-width: 20; }
.lane { stroke: #ebebeb; stroke-width: 17; }
.walk-edge { stroke: #bcbccb; stroke-width: 21; }
.walk { stroke: #dddde8; stroke-width: 18; }
.thin { fill: none; stroke: #fff; stroke-width: 3; }
.dotted { fill: none; stroke: #fff; stroke-width: 4.5; stroke-linecap: round; stroke-dasharray: .1 4.2; }
.major-edge { fill: none; stroke: #a7ab5b; stroke-width: 14.8; stroke-linejoin: round; }
.major { fill: none; stroke: #f7fabf; stroke-width: 13; stroke-linejoin: round; }
#major { stroke-width: inherit; }
.foot { fill: none; stroke: #fa8072; stroke-width: 4; stroke-dasharray: 9 6; }
.names text { font: 33.5px "Noto Sans", sans-serif; fill: #1a1a1a; stroke: rgba(255, 255, 255, .6); stroke-width: 5px; paint-order: stroke; text-anchor: middle; dominant-baseline: central; }
.names .quay { font-size: 36px; stroke: none; }
.names .big { font-size: 37px; stroke: none; }
.names .health { fill: #cc1520; font-size: 33px; }
.names .parking { fill: #86bfdf; font-size: 58px; stroke: none; }
.names .strong { fill: #0092da; font-weight: 600; }
.names .water { fill: #4d80b3; font-style: italic; font-size: 43px; }
.names .ref { font-size: 37px; stroke: none; fill: #444; }
.names .green text { fill: #3d8b44; font-style: italic; font-size: 35px; }
```
